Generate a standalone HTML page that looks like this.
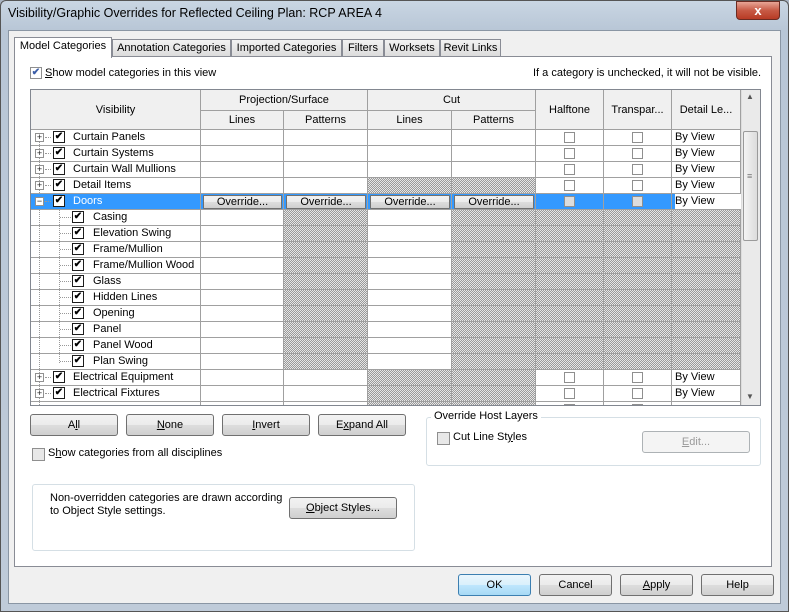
<!DOCTYPE html><html><head><style>
*{box-sizing:border-box;margin:0;padding:0}
body{width:789px;height:612px;overflow:hidden;background:#a9b4c2;font-family:"Liberation Sans",sans-serif;font-size:11px;color:#000;position:relative}
.a{position:absolute}
.frame{left:0;top:0;width:789px;height:612px;background:linear-gradient(#c9d6e3,#b8c6d6 30px,#bfcbd9);border:1px solid #555;border-radius:6px 6px 0 0}
.client{left:8px;top:30px;width:773px;height:574px;background:#f0f0f0;border:1px solid #8a96a4}
.tabp{left:14px;top:56px;width:758px;height:511px;background:#fff;border:1px solid #898c95}
.tab{top:39px;height:18px;background:linear-gradient(#f2f2f2,#dcdcdc);border:1px solid #898c95;padding:2px 0 0;text-align:center;white-space:nowrap;overflow:hidden}
.grid{left:30px;top:89px;width:731px;height:317px;border:1px solid #828790;background:#fff;overflow:hidden}
.h{background:#f0f0f0;border-right:1px solid #a0a0a0;border-bottom:1px solid #a0a0a0;text-align:center}
.c{height:16px;border-right:1px solid #a0a0a0;border-bottom:1px solid #a0a0a0;background:#fff}
.x{background:repeating-conic-gradient(#9a9a9a 0 25%,#e6e6e6 0 50%) 0 0/2px 2px}
.cb{width:12px;height:12px;border:1px solid #1c1c1c;background:#fff;font-size:10px;line-height:10px;text-align:center;font-weight:bold}
.ucb{width:11px;height:11px;border:1px solid #8f8f8f;background:#fff}
.btn{height:22px;border:1px solid #707070;border-radius:3px;background:linear-gradient(#f2f2f2,#ebebeb 50%,#dddddd 51%,#cfcfcf);text-align:center;line-height:20px}
.ex{width:9px;height:9px;border:1px solid #919191;background:#fff;font-size:9px;line-height:7px;text-align:center;color:#222}
u{text-decoration:underline}
</style></head><body>
<div class="a frame"></div>
<div class="a" style="left:8px;top:6px;font-size:12.5px">Visibility/Graphic Overrides for Reflected Ceiling Plan: RCP AREA 4</div>
<div class="a" style="left:736px;top:1px;width:44px;height:19px;border:1px solid #6b2b22;border-radius:0 0 4px 4px;background:linear-gradient(#e8a596,#c75a45 50%,#b83b25);color:#fff;text-align:center;font-weight:bold;font-size:13px;line-height:17px">x</div>
<div class="a client"></div>
<div class="a tabp"></div>
<div class="a tab" style="left:112px;width:119px">Annotation Categories</div>
<div class="a tab" style="left:231px;width:111px">Imported Categories</div>
<div class="a tab" style="left:342px;width:42px">Filters</div>
<div class="a tab" style="left:384px;width:56px">Worksets</div>
<div class="a tab" style="left:440px;width:61px">Revit Links</div>
<div class="a tab" style="left:14px;top:37px;width:98px;height:21px;background:#fff;border-bottom:none">Model Categories</div>
<div class="a cb" style="left:30px;top:67px;border-color:#8f8f8f;color:#3c5ea8">✔</div>
<div class="a" style="left:45px;top:67px"><u>S</u>how model categories in this view</div>
<div class="a" style="left:533px;top:67px">If a category is unchecked, it will not be visible.</div>

<div class="a grid">
<div class="a h" style="left:0;top:0;width:170px;height:40px;line-height:40px">Visibility</div>
<div class="a h" style="left:170px;top:0;width:167px;height:21px;line-height:20px">Projection/Surface</div>
<div class="a h" style="left:337px;top:0;width:168px;height:21px;line-height:20px">Cut</div>
<div class="a h" style="left:170px;top:21px;width:83px;height:19px;line-height:18px">Lines</div>
<div class="a h" style="left:253px;top:21px;width:84px;height:19px;line-height:18px">Patterns</div>
<div class="a h" style="left:337px;top:21px;width:84px;height:19px;line-height:18px">Lines</div>
<div class="a h" style="left:421px;top:21px;width:84px;height:19px;line-height:18px">Patterns</div>
<div class="a h" style="left:505px;top:0;width:68px;height:40px;line-height:40px">Halftone</div>
<div class="a h" style="left:573px;top:0;width:68px;height:40px;line-height:40px">Transpar...</div>
<div class="a h" style="left:641px;top:0;width:69px;height:40px;line-height:40px">Detail Le...</div>
</div>

<div id="rows"></div>
<div class="a" style="left:741px;top:90px;width:19px;height:315px;background:#eaeaea;border-left:1px solid #ddd"></div>
<div class="a" style="left:743px;top:131px;width:15px;height:110px;border:1px solid #9a9a9a;border-radius:2px;background:linear-gradient(90deg,#f4f4f4,#dcdcdc)"></div>
<div class="a" style="left:746px;top:92px;font-size:8px;color:#555">▲</div>
<div class="a" style="left:746px;top:392px;font-size:8px;color:#555">▼</div>
<div class="a" style="left:747px;top:171px;font-size:9px;color:#777">≡</div>
<script>
var R=[["Curtain Panels",0,"n"],["Curtain Systems",0,"n"],["Curtain Wall Mullions",0,"n"],["Detail Items",0,"cut"],["Doors",0,"sel"],
["Casing",1],["Elevation Swing",1],["Frame/Mullion",1],["Frame/Mullion Wood",1],["Glass",1],["Hidden Lines",1],["Opening",1],["Panel",1],["Panel Wood",1],["Plan Swing",1],
["Electrical Equipment",0,"cut"],["Electrical Fixtures",0,"cut"],["",0,"cut"]];
var cols=[[200,83],[283,84],[367,84],[451,84],[535,68],[603,68],[671,69]];
var h='<div class="a" style="left:39px;top:135px;height:270px;border-left:1px dotted #999"></div><div class="a" style="left:59px;top:206px;height:157px;border-left:1px dotted #999"></div>';
R.forEach(function(r,i){var y=130+16*i;var ch=r[1],t=r[2]||"ch";
 h+='<div class="a c" style="left:31px;top:'+y+'px;width:170px;'+(t=="sel"?'background:#3399ff;':'background:transparent;')+'"></div>';
 if(r[0]){
 if(!ch){h+='<div class="a ex" style="left:35px;top:'+(y+3)+'px">'+(t=="sel"?'−':'+')+'</div><div class="a" style="left:45px;top:'+(y+7)+'px;width:6px;border-top:1px dotted #999"></div><div class="a cb" style="left:53px;top:'+(y+1)+'px">✔</div><div class="a" style="left:73px;top:'+(y+1)+'px;'+(t=="sel"?'color:#fff;':'')+'">'+r[0]+'</div>';}
 else{h+='<div class="a" style="left:60px;top:'+(y+7)+'px;width:11px;border-top:1px dotted #999"></div><div class="a cb" style="left:72px;top:'+(y+1)+'px">✔</div><div class="a" style="left:93px;top:'+(y+1)+'px">'+r[0]+'</div>';}
 }
 cols.forEach(function(c,j){var x=0;
  if(t=="cut"&&(j==2||j==3))x=1;
  if(t=="ch"&&(j==1||j>=3))x=1;
  var bg=t=="sel"?"background:#3399ff;":"";
  h+='<div class="a c'+(x?' x':'')+'" style="left:'+(c[0]+1)+'px;top:'+y+'px;width:'+c[1]+'px;'+bg+'"></div>';
  if(t=="sel"&&j<4)h+='<div class="a btn" style="left:'+(c[0]+3)+'px;top:'+(y+1)+'px;width:'+(c[1]-4)+'px;height:14px;line-height:12px;border-radius:1px">Override...</div>';
  if((t=="n"||t=="cut"||t=="sel")&&(j==4||j==5))h+='<div class="a ucb" style="left:'+(c[0]+29)+'px;top:'+(y+2)+'px;'+(t=="sel"?'background:#ddd;':'')+'"></div>';
  if((t=="n"||t=="cut"||t=="sel")&&j==6&&r[0])h+='<div class="a" style="left:'+(c[0]+4)+'px;top:'+(y)+'px;padding-top:1px;'+(t=="sel"?'background:#fff;width:66px;height:15px;':'')+'">By View</div>';
 });
});
document.getElementById("rows").outerHTML='<div class="a" style="left:0;top:0;width:789px;height:405px;overflow:hidden">'+h+'</div>';
</script>

<div class="a btn" style="left:30px;top:414px;width:88px">A<u>l</u>l</div>
<div class="a btn" style="left:126px;top:414px;width:88px"><u>N</u>one</div>
<div class="a btn" style="left:222px;top:414px;width:88px"><u>I</u>nvert</div>
<div class="a btn" style="left:318px;top:414px;width:88px">E<u>x</u>pand All</div>
<div class="a ucb" style="left:32px;top:448px;width:13px;height:13px;background:#e8e8e8"></div>
<div class="a" style="left:48px;top:447px">S<u>h</u>ow categories from all disciplines</div>
<div class="a" style="left:426px;top:417px;width:335px;height:49px;border:1px solid #d5dfe5;border-radius:3px"></div>
<div class="a" style="left:431px;top:410px;background:#fff;padding:0 3px">Override Host Layers</div>
<div class="a ucb" style="left:437px;top:432px;width:13px;height:13px;background:#e8e8e8"></div>
<div class="a" style="left:453px;top:431px">Cut Line St<u>y</u>les</div>
<div class="a btn" style="left:642px;top:431px;width:108px;background:#f4f4f4;border-color:#adb2b5;color:#9a9a9a"><u>E</u>dit...</div>
<div class="a" style="left:32px;top:484px;width:383px;height:67px;border:1px solid #d5dfe5;border-radius:3px"></div>
<div class="a" style="left:50px;top:492px;line-height:13px">Non-overridden categories are drawn according<br>to Object Style settings.</div>
<div class="a btn" style="left:289px;top:497px;width:108px"><u>O</u>bject Styles...</div>
<div class="a btn" style="left:458px;top:574px;width:73px;border-color:#3c7fb1;background:linear-gradient(#eaf6fd,#d9f0fc 50%,#bee6fd 51%,#a7d9f5)">OK</div>
<div class="a btn" style="left:539px;top:574px;width:73px">Cancel</div>
<div class="a btn" style="left:620px;top:574px;width:73px"><u>A</u>pply</div>
<div class="a btn" style="left:701px;top:574px;width:73px">Help</div>
</body></html>
